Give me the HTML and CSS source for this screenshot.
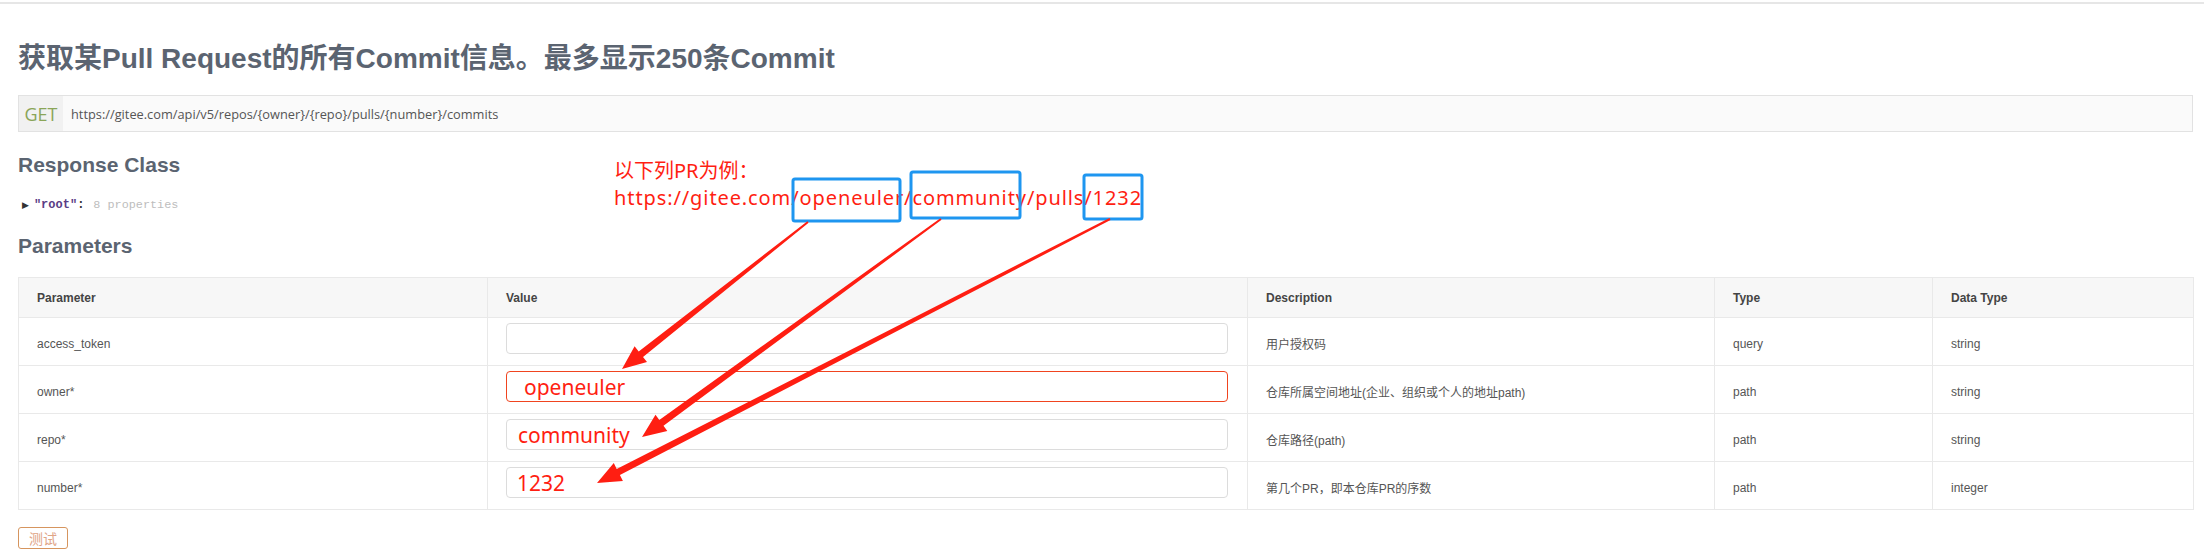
FILE: index.html
```html
<!DOCTYPE html>
<html lang="zh">
<head>
<meta charset="utf-8">
<title>获取某Pull Request的所有Commit信息</title>
<link rel="stylesheet" href="styles.css">
</head>
<body>
<div class="topline"></div>
<main class="page">
  <h1 class="title">获取某Pull Request的所有Commit信息。最多显示250条Commit</h1>
  <div class="endpoint">
    <span class="method">GET</span>
    <span class="url">https://gitee.com/api/v5/repos/{owner}/{repo}/pulls/{number}/commits</span>
  </div>
  <h2 class="section">Response Class</h2>
  <div class="model"><span class="tri">&#9654;</span><span class="key">"root"</span><span class="colon">:</span><span class="props">8 properties</span></div>
  <h2 class="section params-h">Parameters</h2>
  <table class="params">
    <colgroup>
      <col class="c1"><col class="c2"><col class="c3"><col class="c4"><col class="c5">
    </colgroup>
    <thead>
      <tr><th>Parameter</th><th>Value</th><th>Description</th><th>Type</th><th>Data Type</th></tr>
    </thead>
    <tbody>
      <tr><td>access_token</td><td class="val"><input class="inp" type="text" value=""></td><td>用户授权码</td><td>query</td><td>string</td></tr>
      <tr><td>owner*</td><td class="val"><input class="inp inp-red pad-owner" type="text" value="openeuler"></td><td>仓库所属空间地址(企业、组织或个人的地址path)</td><td>path</td><td>string</td></tr>
      <tr><td>repo*</td><td class="val"><input class="inp inp-text pad-repo" type="text" value="community"></td><td>仓库路径(path)</td><td>path</td><td>string</td></tr>
      <tr><td>number*</td><td class="val"><input class="inp inp-text pad-num" type="text" value="1232"></td><td>第几个PR，即本仓库PR的序数</td><td>path</td><td>integer</td></tr>
    </tbody>
  </table>
  <button class="test-btn" type="button">测试</button>
</main>

<div class="annot">
  <div class="note">
    <div class="note-line">以下列PR为例：</div>
    <div class="note-line note-url">https://gitee.com/openeuler/community/pulls/1232</div>
  </div>
  <svg class="marks" width="2204" height="554" viewBox="0 0 2204 554" xmlns="http://www.w3.org/2000/svg">
    <g fill="none" stroke="#1e96f0" stroke-width="3">
      <rect x="793" y="179" width="107" height="42" rx="2"/>
      <rect x="911" y="172" width="109" height="46" rx="2"/>
      <rect x="1084" y="175" width="58" height="44" rx="2"/>
    </g>
    <g fill="#ff1e12">
      <polygon points="808.6,222.8 643.0,356.9 647.0,362.0 622,369 634.6,346.3 638.7,351.4 807.4,221.2"/>
      <polygon points="941.6,219.8 663.5,425.7 667.3,430.9 642,437 655.5,414.8 659.3,420.0 940.4,218.2"/>
      <polygon points="1110.5,220.1 619.9,475.1 622.9,480.9 597,483 613.8,463.1 616.7,468.9 1109.5,217.9"/>
    </g>
  </svg>
</div>
</body>
</html>
```

FILE: styles.css
```css
html, body {
  margin: 0;
  padding: 0;
  background: #ffffff;
}
body {
  position: relative;
  width: 2204px;
  height: 554px;
  overflow: hidden;
  font-family: "Liberation Sans", "Noto Sans CJK SC", sans-serif;
}
.topline {
  margin-top: 2px;
  height: 2px;
  background: #e6e6e6;
}
.page {
  padding: 0 11px 0 18px;
}
.title {
  margin: 38px 0 0 0;
  font-family: "Liberation Sans", "Noto Sans CJK SC", sans-serif;
  font-size: 28px;
  line-height: 34px;
  font-weight: bold;
  color: #5b6471;
}
.endpoint {
  margin-top: 19px;
  height: 35px;
  display: flex;
  align-items: stretch;
  border: 1px solid #e2e2e2;
  background: #fafafa;
}
.method {
  width: 44px;
  display: flex;
  align-items: center;
  justify-content: center;
  background: #f1f1f1;
  font-family: "Open Sans", sans-serif;
  font-size: 18px;
  color: #8aa558;
}
.url {
  display: flex;
  align-items: center;
  margin-left: 8px;
  font-family: "Open Sans", sans-serif;
  font-size: 12.8px;
  color: #555555;
}
.section {
  margin: 21px 0 0 0;
  font-family: "Liberation Sans", sans-serif;
  font-size: 21px;
  line-height: 24px;
  font-weight: bold;
  color: #5b6471;
}
.model {
  margin-top: 20px;
  display: flex;
  align-items: center;
  height: 16px;
  font-family: "Liberation Mono", monospace;
  font-size: 12px;
}
.tri {
  font-size: 9px;
  color: #333333;
  margin-left: 4px;
  margin-right: 5px;
  font-family: "DejaVu Sans", sans-serif;
}
.key {
  color: #5a3d85;
  font-weight: bold;
}
.colon {
  color: #333333;
  font-weight: bold;
  margin-right: 9px;
}
.props {
  color: #bdbdbd;
  font-size: 11.8px;
}
.params-h {
  margin-top: 21px;
}
.params {
  margin-top: 19px;
  width: 2175px;
  table-layout: fixed;
  border-collapse: collapse;
  border: 1px solid #dedede;
}
.c1 { width: 469px; }
.c2 { width: 760px; }
.c3 { width: 467px; }
.c4 { width: 218px; }
.c5 { width: 261px; }
.params th {
  height: 40px;
  box-sizing: border-box;
  padding: 0 18px;
  text-align: left;
  vertical-align: middle;
  background: #f7f7f7;
  border: 1px solid #e9e9e9;
  font-size: 12px;
  font-weight: bold;
  color: #444444;
}
.params td {
  height: 48px;
  padding: 4px 18px 0 18px;
  box-sizing: border-box;
  vertical-align: middle;
  border: 1px solid #e9e9e9;
  font-size: 12px;
  color: #555555;
  white-space: nowrap;
}
.params td.val {
  vertical-align: top;
  padding: 5px 19px 0 18px;
}
.inp {
  display: block;
  box-sizing: border-box;
  width: 100%;
  height: 31px;
  margin: 0;
  padding: 0 10px;
  border: 1px solid #dcdcdc;
  border-radius: 4px;
  background: #ffffff;
  outline: none;
  font-family: "Noto Sans", "Open Sans", sans-serif;
  font-size: 21px;
  color: #ff1e12;
}
.inp-red {
  border-color: #f0441f;
}
.pad-owner { padding-left: 17px; }
.pad-repo { padding-left: 11px; }
.pad-num { padding-left: 10px; }
.test-btn {
  display: block;
  margin-top: 17px;
  width: 50px;
  height: 22px;
  padding: 0;
  border: 1px solid #d6955e;
  border-radius: 3px;
  background: #ffffff;
  font-family: "Noto Sans CJK SC", sans-serif;
  font-size: 14px;
  line-height: 20px;
  color: #e0a486;
}
.annot {
  position: absolute;
  left: 0;
  top: 0;
  width: 2204px;
  height: 554px;
  pointer-events: none;
}
.note {
  position: absolute;
  left: 614px;
  top: 157px;
  font-family: "Noto Sans", "Noto Sans CJK SC", sans-serif;
  font-size: 20px;
  line-height: 27px;
  color: #ff1e12;
  white-space: nowrap;
}
.note-url {
  letter-spacing: 0.9px;
}
.marks {
  position: absolute;
  left: 0;
  top: 0;
}
```
